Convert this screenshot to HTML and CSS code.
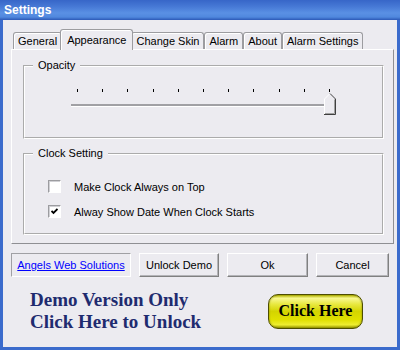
FILE: index.html
```html
<!DOCTYPE html>
<html lang="en">
<head>
    <meta charset="UTF-8">
    <meta name="viewport" content="width=device-width, initial-scale=1.0">
    <title>Settings</title>
    <link rel="stylesheet" href="styles.css">
</head>
<body>

    <div class="window">
        <div class="titlebar">Settings</div>

        <div class="client">
            <!-- Tab strip -->
            <div class="tabs">
                <div class="tab">General</div>
                <div class="tab active">Appearance</div>
                <div class="tab">Change Skin</div>
                <div class="tab">Alarm</div>
                <div class="tab">About</div>
                <div class="tab">Alarm Settings</div>
            </div>

            <div class="panel">
                <fieldset class="group">
                    <legend>Opacity</legend>
                    <div class="slider">
                        <div class="ticks">
                            <span></span><span></span><span></span><span></span>
                            <span></span><span></span><span></span><span></span>
                            <span></span><span></span><span></span>
                        </div>
                        <div class="track"></div>
                        <svg class="thumb" width="12" height="22" viewBox="0 0 12 22">
                            <path d="M0.5 21.5 V6 L6 0.5 L11.5 6 V21.5 Z" fill="#ecebf0"/>
                            <polyline points="0.5,21 0.5,6 6,0.5" fill="none" stroke="#ffffff"/>
                            <polyline points="6,0.5 11.5,6 11.5,21.5 0,21.5" fill="none" stroke="#404040"/>
                            <polyline points="10.5,6.5 10.5,20.5 1,20.5" fill="none" stroke="#a0a0a0"/>
                        </svg>
                    </div>
                </fieldset>

                <fieldset class="group clock">
                    <legend>Clock Setting</legend>
                    <label class="check-row">
                        <span class="checkbox"></span>
                        Make Clock Always on Top
                    </label>
                    <label class="check-row">
                        <span class="checkbox">
                            <svg width="7" height="7" viewBox="0 0 7 7">
                                <polyline points="0.5,3 2.5,5 6.5,1" fill="none" stroke="#000" stroke-width="1.8"/>
                            </svg>
                        </span>
                        Alway Show Date When Clock Starts
                    </label>
                </fieldset>
            </div>

            <!-- Dialog buttons -->
            <div class="actions">
                <div class="link-box"><a href="#">Angels Web Solutions</a></div>
                <button class="btn btn-unlock">Unlock Demo</button>
                <button class="btn btn-ok">Ok</button>
                <button class="btn btn-cancel">Cancel</button>
            </div>

            <div class="promo">
                <div class="promo-text">Demo Version Only<br>Click Here to Unlock</div>
                <button class="click-here">Click Here</button>
            </div>
        </div>
    </div>

</body>
</html>
```

FILE: styles.css
```css
body {
    margin: 0;
    font-family: 'Liberation Sans', Arial, sans-serif;
    font-size: 11px;
    color: #000;
}

.window {
    width: 400px;
    height: 350px;
    box-sizing: border-box;
    display: flex;
    flex-direction: column;
    background-color: #3b6bcc;
    padding: 0 3px 3px;
}

.titlebar {
    height: 20px;
    margin: 0 -3px;
    padding-left: 4px;
    line-height: 20px;
    font-size: 12px;
    font-weight: bold;
    color: white;
    background: linear-gradient(to bottom, #3766c8 0%, #4577d4 30%, #5a90e4 65%, #5088de 85%, #2c58b6 100%);
}

.client {
    flex: 1;
    background-color: #ecebf0;
    padding: 0 3px 0 8px;
}

/* Tabs */
.tabs {
    display: flex;
    align-items: flex-end;
    height: 20px;
    margin-top: 9px;
    padding-left: 2px;
}

.tab {
    height: 17px;
    box-sizing: border-box;
    line-height: 17px;
    padding: 0 4px;
    border: 1px solid #9c9ca0;
    border-bottom: none;
    border-radius: 3px 3px 0 0;
    box-shadow: inset 1px 1px 0 #fff;
}

.tab.active {
    position: relative;
    z-index: 1;
    height: 21px;
    line-height: 20px;
    margin: 0 -2px -1px;
    padding: 0 6px;
    background-color: #ecebf0;
}

.panel {
    border: 1px solid;
    border-color: #fff #8f8f93 #8f8f93 #fff;
    padding: 9px 9px 8px 11px;
}

/* Group boxes */
.group {
    margin: 0;
    padding: 0;
    border: 2px groove #fff;
}

.group legend {
    margin-left: 8px;
    padding: 0 5px;
    line-height: 13px;
}

.clock {
    margin-top: 8px;
    padding: 20px 0 15px;
}

/* Opacity slider */
.slider {
    position: relative;
    width: 265px;
    height: 48px;
    margin: 17px 0 0 46px;
}

.ticks {
    display: flex;
    justify-content: space-between;
    padding: 0 6px;
}

.ticks span {
    width: 1px;
    height: 3px;
    background-color: #000;
}

.track {
    height: 2px;
    margin-top: 12px;
    background-color: #a0a0a4;
    border-bottom: 1px solid #fff;
}

.thumb {
    position: absolute;
    top: 4px;
    left: 253px;
}

/* Checkboxes */
.check-row {
    display: flex;
    align-items: center;
    gap: 13px;
    height: 13px;
    margin-left: 23px;
}

.check-row + .check-row {
    margin-top: 12px;
}

.checkbox {
    width: 13px;
    height: 13px;
    box-sizing: border-box;
    display: flex;
    align-items: center;
    justify-content: center;
    background-color: #fff;
    border: 1px solid;
    border-color: #9c9ca0 #fff #fff #9c9ca0;
    box-shadow: inset 1px 1px 0 #d0d0d4;
}

/* Buttons */
.actions {
    display: flex;
    gap: 8px;
    margin-top: 9px;
}

.link-box {
    width: 120px;
    height: 24px;
    box-sizing: border-box;
    display: flex;
    align-items: center;
    justify-content: center;
    border: 1px solid;
    border-color: #a0a0a4 #fff #fff #a0a0a4;
}

.link-box a {
    color: #0000ff;
}

.btn {
    height: 24px;
    box-sizing: border-box;
    padding: 0;
    font: inherit;
    color: #000;
    background-color: #ecebf0;
    border: 1px solid;
    border-color: #fff #808080 #808080 #fff;
    box-shadow: inset -1px -1px 0 #b4b4b8;
}

.btn-unlock { width: 80px; }
.btn-ok { width: 81px; }
.btn-cancel { width: 73px; }

/* Demo banner */
.promo {
    display: flex;
    align-items: center;
    justify-content: space-between;
    margin-top: 12px;
    padding: 0 31px 0 19px;
}

.promo-text {
    font-family: 'Liberation Serif', 'Times New Roman', serif;
    font-size: 19px;
    font-weight: bold;
    line-height: 22px;
    color: #1f2b6f;
}

.click-here {
    width: 95px;
    height: 35px;
    box-sizing: border-box;
    padding: 0;
    font-family: 'Liberation Serif', 'Times New Roman', serif;
    font-size: 16px;
    font-weight: bold;
    color: #000;
    border: 1px solid #4d4d00;
    border-radius: 10px;
    background: linear-gradient(to bottom, #b8b800 0%, #f8f890 10%, #e8e840 28%, #d4d400 50%, #e0e000 75%, #eeee30 90%, #9a9a00 100%);
    box-shadow: inset 0 0 2px #7a7a00;
}
```
